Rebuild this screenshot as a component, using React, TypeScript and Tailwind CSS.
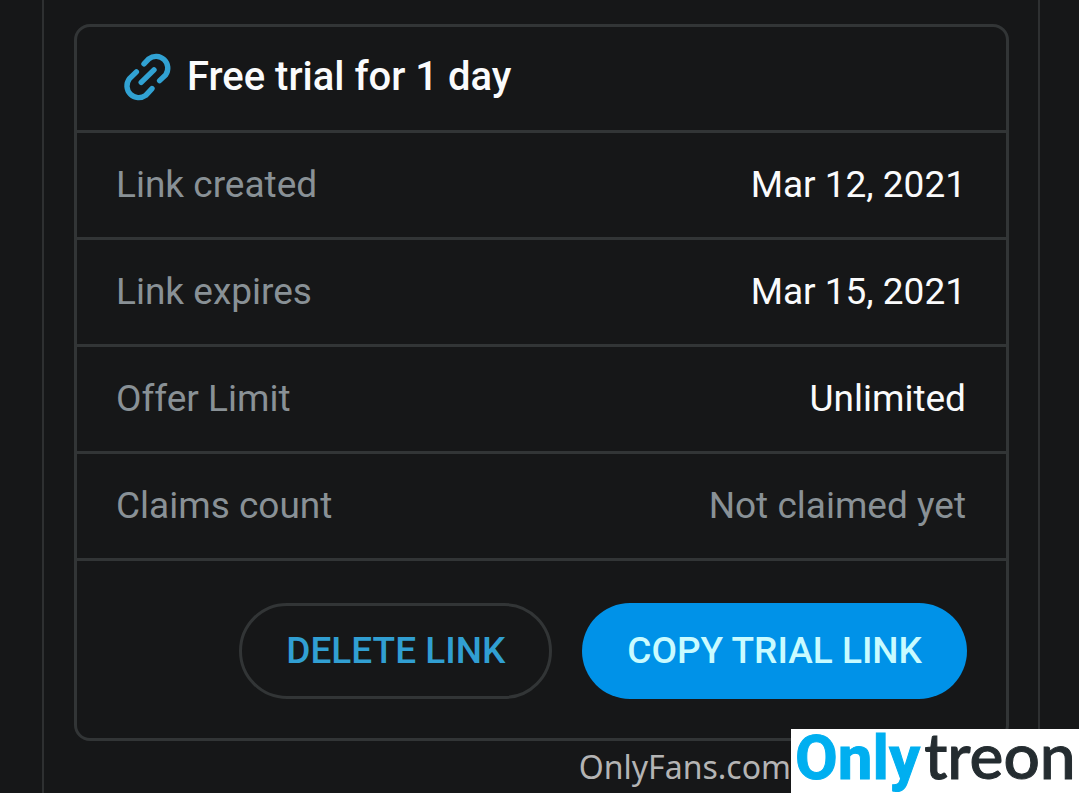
interface DetailRowProps {
  label: string;
  value: string;
  muted?: boolean;
}

const details: DetailRowProps[] = [
  { label: 'Link created', value: 'Mar 12, 2021' },
  { label: 'Link expires', value: 'Mar 15, 2021' },
  { label: 'Offer Limit', value: 'Unlimited' },
  { label: 'Claims count', value: 'Not claimed yet', muted: true },
];

const LinkIcon: React.FC = () => (
  <svg className="w-12 h-12 shrink-0" viewBox="0 0 48 48" fill="none" stroke="#31a2d3" strokeWidth="5.4" strokeLinecap="round" aria-hidden="true">
    <path d="M21 10.8 L25.8 5.8 A11.8 11.8 0 0 1 42.6 22 L36.6 27.6" />
    <path d="M13.4 18.8 L6.3 25.8 A11.8 11.8 0 0 0 22.7 42.4 L29 35.6" />
    <path d="M18.2 29.4 L31 16.8" />
  </svg>
);

const DetailRow: React.FC<DetailRowProps> = ({ label, value, muted }) => {
  return (
    <div className="flex items-center justify-between h-[107px] pl-[39px] pr-10 pb-px border-b-[3px] border-[#323536]">
      <dt className="text-[#899196]">{label}</dt>
      <dd className={muted ? 'text-[#899196]' : 'text-[#fafbfc]'}>{value}</dd>
    </div>
  );
};

const App: React.FC = () => {
  return (
    <div className="relative min-h-screen flex bg-[#161718] pl-[42px] pr-[39px] overflow-hidden font-[Roboto,sans-serif]">
      <main className="flex-1 border-x-2 border-[#2e3031] pl-[30px] pr-[29px] pt-6">
        <section className="border-[3px] border-[#323536] rounded-2xl text-[37px]">
          <header className="flex items-center gap-4 h-[106px] px-[46px] pb-1 border-b-[3px] border-[#323536]">
            <LinkIcon />
            <h1 className="text-[40px] font-medium text-[#fafbfc]">Free trial for 1 day</h1>
          </header>
          <dl>
            {details.map((item) => (
              <DetailRow key={item.label} label={item.label} value={item.value} muted={item.muted} />
            ))}
          </dl>
          <div className="flex justify-end gap-[30px] pt-[42px] pb-[39px] pr-[39px]">
            <button type="button" className="h-24 px-11 rounded-full border-[3px] border-[#323536] font-medium text-[#319fd2]">
              DELETE LINK
            </button>
            <button type="button" className="h-24 px-[45px] rounded-full bg-[#0092e8] font-medium text-[#c9fbff]">
              COPY TRIAL LINK
            </button>
          </div>
        </section>
      </main>

      <div className="absolute right-0 bottom-0 flex items-end">
        <span className="font-['Noto_Sans',sans-serif] text-[32px] leading-[52px] text-[#b4b4b4]">OnlyFans.com</span>
        <div className="flex items-baseline gap-1 w-72 h-16 px-1 bg-white leading-[52px] whitespace-nowrap">
          <span className="text-[62px] font-bold text-[#00aff0] [-webkit-text-stroke:1px]">Only</span>
          <span className="font-[Lato,sans-serif] text-[64px] font-medium text-[#242c30] [-webkit-text-stroke:1px]">treon</span>
        </div>
      </div>
    </div>
  );
};

export default App;
